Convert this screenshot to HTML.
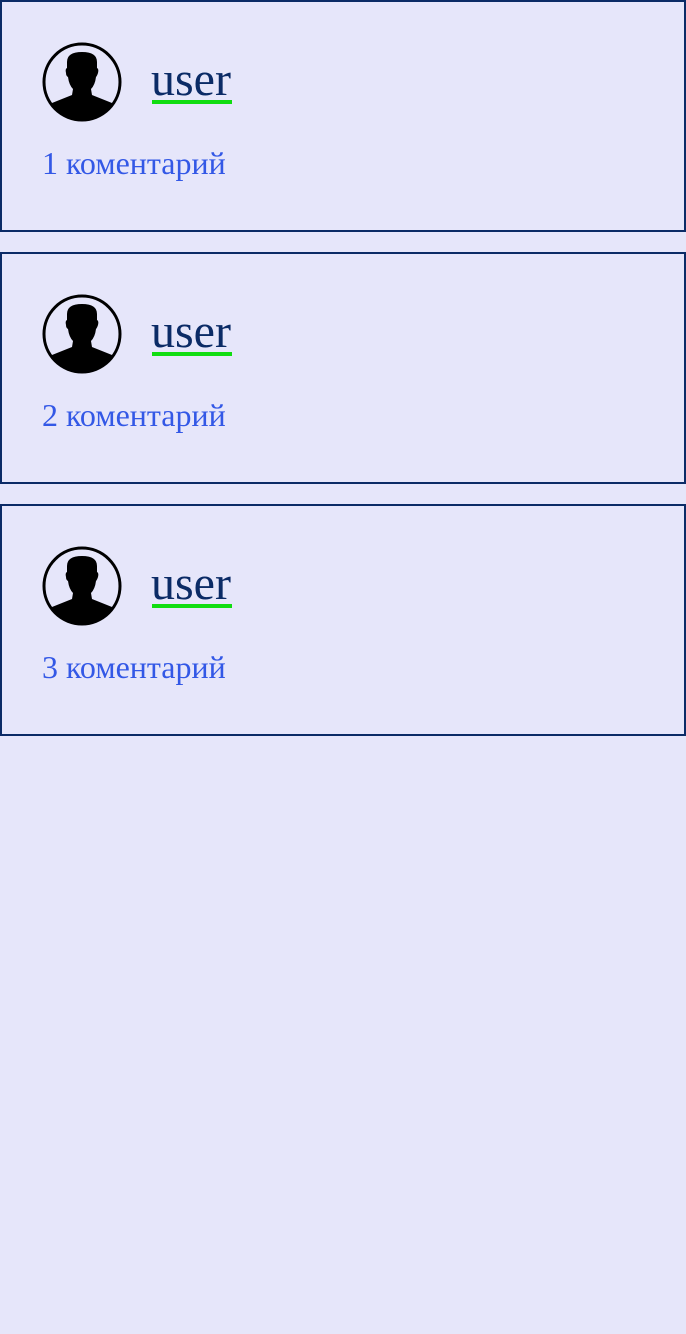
<!DOCTYPE html>
<html><head><meta charset="utf-8"><style>
body{margin:0;background:#e6e6fa;font-family:"Liberation Serif",serif;width:686px;height:1334px;overflow:hidden}
.card{box-sizing:border-box;width:686px;height:232px;border:2px solid #0b2b66;margin-bottom:20px;position:relative}
.av{position:absolute;left:38px;top:38px;width:82px;height:82px}
.name{position:absolute;left:149px;top:50px;font-size:48px;color:#0b2b66;line-height:56px}
.ul{position:absolute;left:150px;top:98px;width:80px;height:4px;background:#11dd11}
.c{position:absolute;left:40px;top:140px;font-size:32px;color:#3358e6;line-height:42px}
</style></head><body>
<div class="card"><svg class="av" viewBox="0 0 82 82"><defs><clipPath id="k"><circle cx="42" cy="42" r="38"/></clipPath></defs><g clip-path="url(#k)"><path d="M27 22 Q27 12 42 12 Q57 12 57 22 L57 28 Q59 29 58 33 Q57 36 56 37 Q55 45 51 49 L52 55 L72 63 L84 84 L0 84 L12 63 L32 55 L33 49 Q29 45 28 37 Q26 36 26 33 Q25 29 27 28 Z" fill="#000"/></g><circle cx="42" cy="42" r="38" fill="none" stroke="#000" stroke-width="3"/></svg><div class="name">user</div><div class="ul"></div><div class="c">1 коментарий</div></div>
<div class="card"><svg class="av" viewBox="0 0 82 82"><defs><clipPath id="k2"><circle cx="42" cy="42" r="38"/></clipPath></defs><g clip-path="url(#k2)"><path d="M27 22 Q27 12 42 12 Q57 12 57 22 L57 28 Q59 29 58 33 Q57 36 56 37 Q55 45 51 49 L52 55 L72 63 L84 84 L0 84 L12 63 L32 55 L33 49 Q29 45 28 37 Q26 36 26 33 Q25 29 27 28 Z" fill="#000"/></g><circle cx="42" cy="42" r="38" fill="none" stroke="#000" stroke-width="3"/></svg><div class="name">user</div><div class="ul"></div><div class="c">2 коментарий</div></div>
<div class="card"><svg class="av" viewBox="0 0 82 82"><defs><clipPath id="k3"><circle cx="42" cy="42" r="38"/></clipPath></defs><g clip-path="url(#k3)"><path d="M27 22 Q27 12 42 12 Q57 12 57 22 L57 28 Q59 29 58 33 Q57 36 56 37 Q55 45 51 49 L52 55 L72 63 L84 84 L0 84 L12 63 L32 55 L33 49 Q29 45 28 37 Q26 36 26 33 Q25 29 27 28 Z" fill="#000"/></g><circle cx="42" cy="42" r="38" fill="none" stroke="#000" stroke-width="3"/></svg><div class="name">user</div><div class="ul"></div><div class="c">3 коментарий</div></div>
</body></html>
